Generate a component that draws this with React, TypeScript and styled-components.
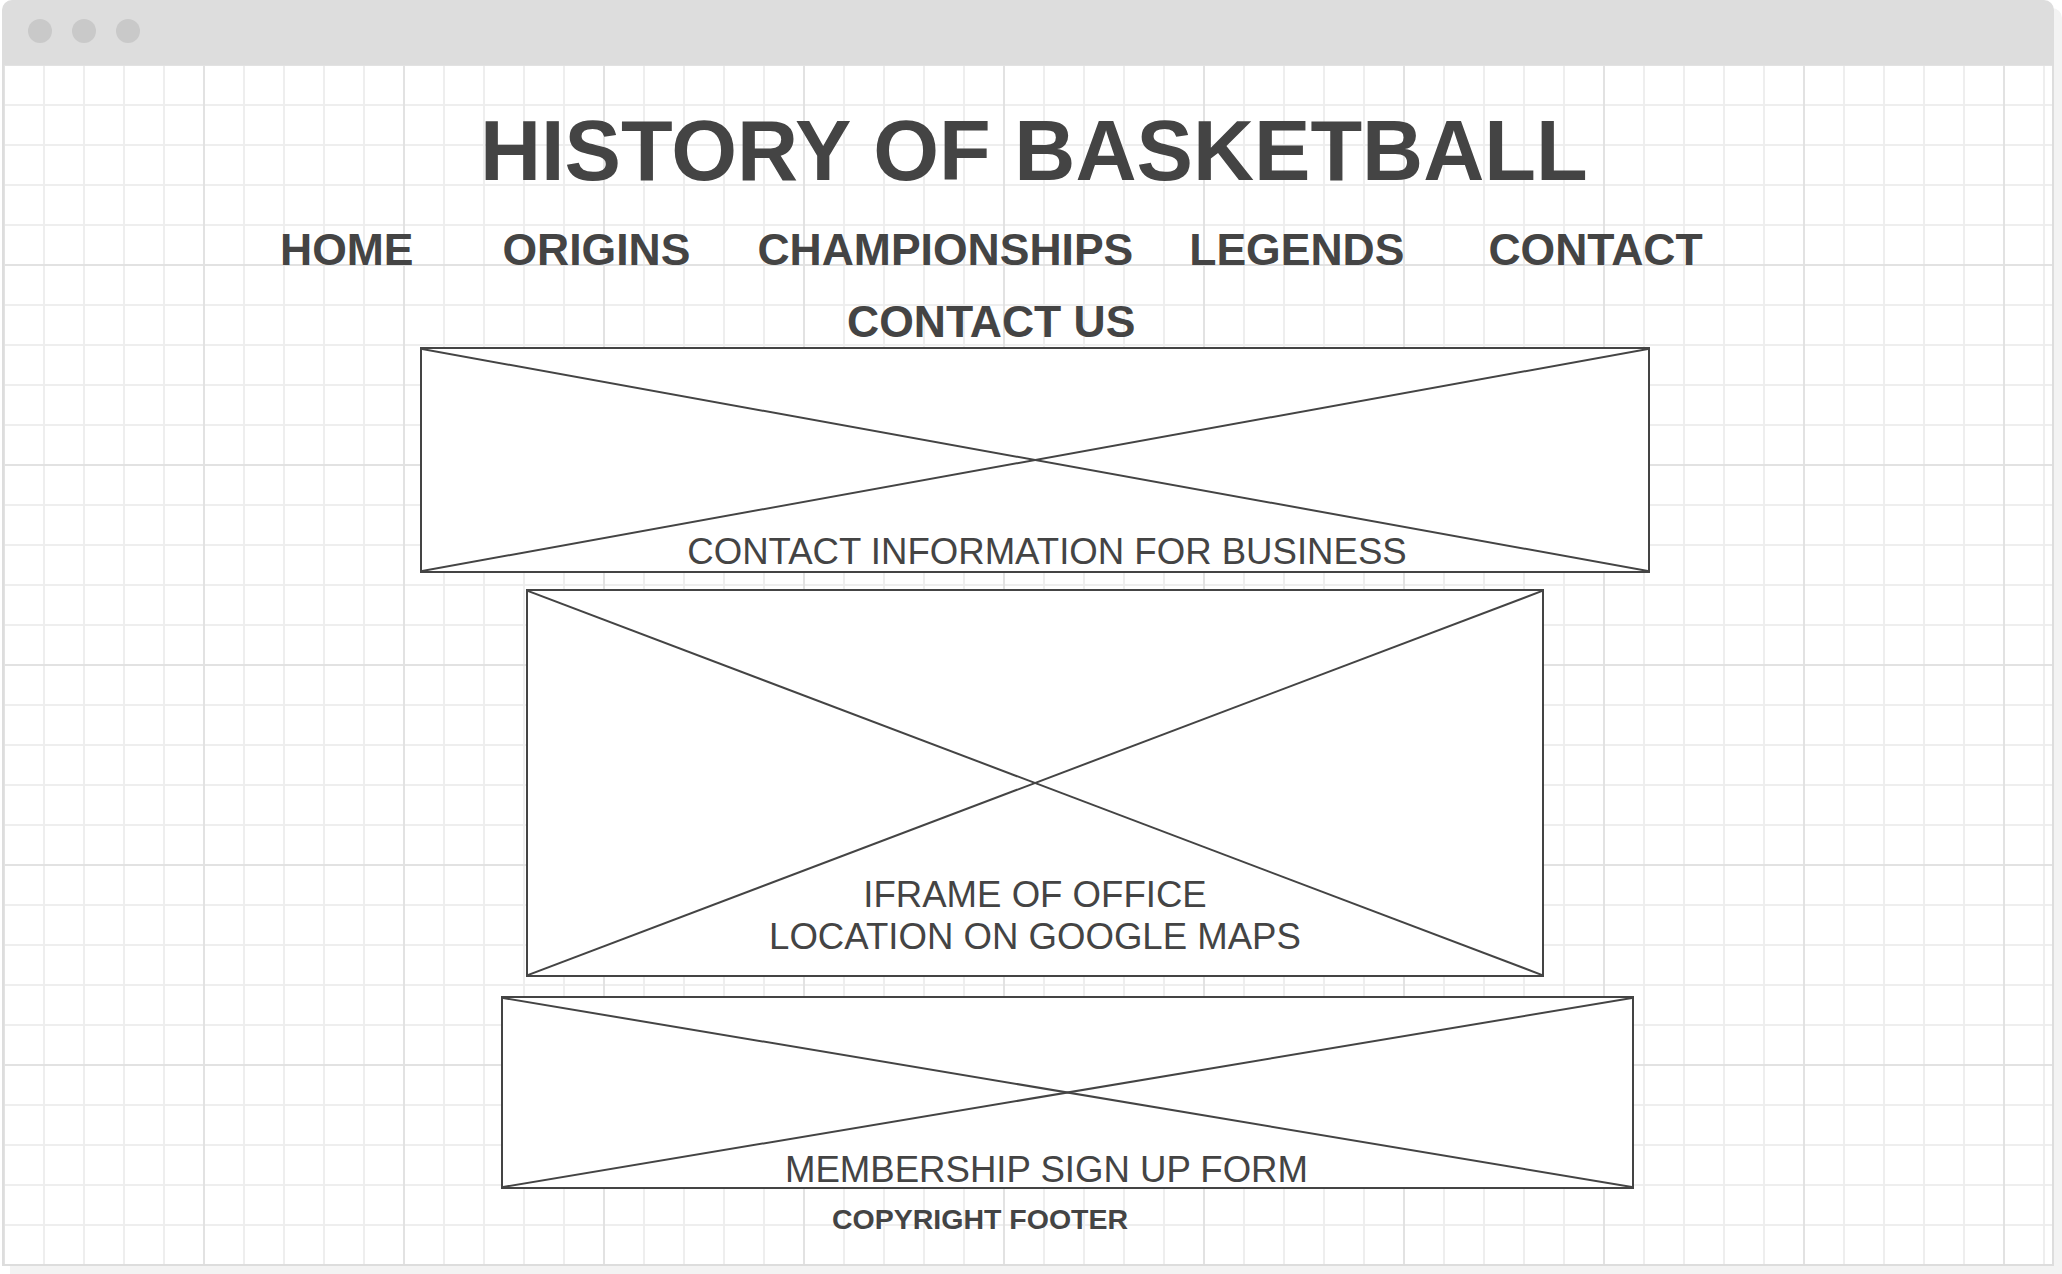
import React from "react";
import styled, { createGlobalStyle } from "styled-components";

const Global = createGlobalStyle`
  html, body { margin: 0; padding: 0; background: #ffffff; }
  body {
    font-family: "Liberation Sans", Arial, Helvetica, sans-serif;
    overflow: hidden;
  }
`;

const Page = styled.div`
  width: 2062px;
  height: 1274px;
  padding-left: 2px;
  box-sizing: border-box;
`;

const Window = styled.div`
  width: 2052px;
  height: 1266px;
  box-sizing: border-box;
  background: #dddddd;
  padding: 0 2px 2px 2px;
  border-radius: 10px 10px 0 0;
  box-shadow: 8px 8px 0 #f3f3f3;
  display: flex;
  flex-direction: column;
`;

const TitleBar = styled.div`
  height: 65px;
  flex: none;
  display: flex;
  align-items: flex-start;
  gap: 20px;
  padding: 19px 0 0 24px;
  box-sizing: border-box;
`;

const Dot = styled.span`
  width: 24px;
  height: 24px;
  border-radius: 50%;
  background: #c9c9c9;
`;

const Canvas = styled.div`
  flex: 1;
  background-color: #ffffff;
  background-image:
    linear-gradient(to right, #e2e2e2 2px, transparent 2px),
    linear-gradient(to bottom, #e2e2e2 2px, transparent 2px),
    linear-gradient(to right, #eeeeee 2px, transparent 2px),
    linear-gradient(to bottom, #eeeeee 2px, transparent 2px);
  background-size: 200px 200px, 200px 200px, 40px 40px, 40px 40px;
  background-position: -1px -1px;
  display: flex;
  flex-direction: column;
  align-items: flex-start;
  padding-top: 44px;
  box-sizing: border-box;
  color: #444444;
`;

const Title = styled.h1`
  margin: 0 0 0 476px;
  font-size: 84.6px;
  line-height: 84px;
  font-weight: 700;
  white-space: nowrap;
`;

const Nav = styled.nav`
  display: flex;
  margin-top: 35px;
  padding-left: 276px;
`;

const NavItem = styled.span<{ $gap: number }>`
  margin-left: ${(p) => p.$gap}px;
  font-size: 44.5px;
  line-height: 44px;
  font-weight: 700;
  white-space: nowrap;
`;

const Heading = styled.h2`
  margin: 28px 0 0 843px;
  font-size: 44.5px;
  line-height: 44px;
  font-weight: 700;
  white-space: nowrap;
`;

const WireBox = styled.div<{ $top: number; $left: number; $w: number; $h: number }>`
  position: relative;
  margin-top: ${(p) => p.$top}px;
  margin-left: ${(p) => p.$left}px;
  width: ${(p) => p.$w}px;
  height: ${(p) => p.$h}px;
  box-sizing: border-box;
  border: 2px solid #444444;
  background: #ffffff;
  display: flex;
  flex-direction: column;
  justify-content: flex-end;
`;

const Cross = styled.svg`
  position: absolute;
  inset: 0;
  width: 100%;
  height: 100%;
`;

const BoxLabel = styled.div<{ $bottom: number; $shift: number }>`
  position: relative;
  font-size: 36.6px;
  line-height: 42px;
  font-weight: 400;
  text-align: center;
  white-space: nowrap;
  margin-bottom: ${(p) => p.$bottom}px;
  padding-left: ${(p) => (p.$shift > 0 ? p.$shift * 2 : 0)}px;
  padding-right: ${(p) => (p.$shift < 0 ? -p.$shift * 2 : 0)}px;
`;

const Footer = styled.footer`
  margin: 16px 0 0 828px;
  font-size: 28.5px;
  line-height: 28px;
  font-weight: 700;
  white-space: nowrap;
`;

const X = () => (
  <Cross viewBox="0 0 100 100" preserveAspectRatio="none">
    <line x1="0" y1="0" x2="100" y2="100" stroke="#444444" strokeWidth="2" vectorEffect="non-scaling-stroke" />
    <line x1="0" y1="100" x2="100" y2="0" stroke="#444444" strokeWidth="2" vectorEffect="non-scaling-stroke" />
  </Cross>
);

const navItems: { label: string; gap: number }[] = [
  { label: "HOME", gap: 0 },
  { label: "ORIGINS", gap: 89 },
  { label: "CHAMPIONSHIPS", gap: 67 },
  { label: "LEGENDS", gap: 56 },
  { label: "CONTACT", gap: 84 },
];

export default function App() {
  return (
    <>
      <Global />
      <Page>
        <Window>
          <TitleBar>
            <Dot />
            <Dot />
            <Dot />
          </TitleBar>
          <Canvas>
            <Title>HISTORY OF BASKETBALL</Title>
            <Nav>
              {navItems.map((n) => (
                <NavItem key={n.label} $gap={n.gap}>
                  {n.label}
                </NavItem>
              ))}
            </Nav>
            <Heading>CONTACT US</Heading>
            <WireBox $top={3} $left={416} $w={1230} $h={226}>
              <X />
              <BoxLabel $bottom={-2} $shift={12}>CONTACT INFORMATION FOR BUSINESS</BoxLabel>
            </WireBox>
            <WireBox $top={16} $left={522} $w={1018} $h={388}>
              <X />
              <BoxLabel $bottom={17} $shift={0}>
                IFRAME OF OFFICE
                <br />
                LOCATION ON GOOGLE MAPS
              </BoxLabel>
            </WireBox>
            <WireBox $top={19} $left={497} $w={1133} $h={193}>
              <X />
              <BoxLabel $bottom={-4} $shift={-21}>MEMBERSHIP SIGN UP FORM</BoxLabel>
            </WireBox>
            <Footer>COPYRIGHT FOOTER</Footer>
          </Canvas>
        </Window>
      </Page>
    </>
  );
}
